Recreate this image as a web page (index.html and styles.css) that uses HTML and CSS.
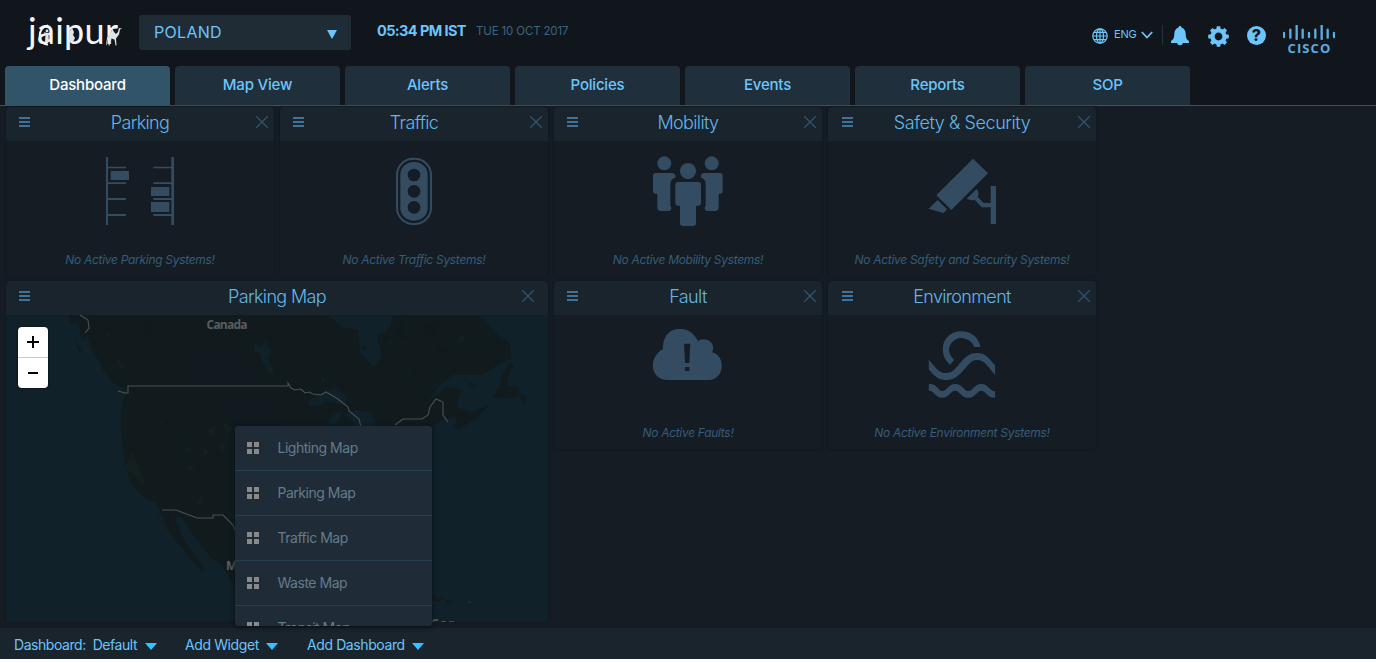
FILE: index.html
```html
<!DOCTYPE html>
<html lang="en">
<head>
<meta charset="utf-8">
<title>Dashboard</title>
<link rel="stylesheet" href="styles.css">
</head>
<body>
<svg class="defs" width="0" height="0">
  <symbol id="menu" viewBox="0 0 11 10"><path d="M0 0h11v2H0zM0 4h11v2H0zM0 8h11v2H0z" fill="currentColor"/></symbol>
  <symbol id="close" viewBox="0 0 12 12"><path d="M.3.3l11.400 11.400M11.700.3L.3 11.700" stroke="currentColor" stroke-width="1.300"/></symbol>
  <symbol id="tiles" viewBox="0 0 12 12"><path d="M0 0h5v5H0zM7 0h5v5H7zM0 7h5v5H0zM7 7h5v5H7z" fill="currentColor"/></symbol>
</svg>
<div class="app">
  <header class="header">
    <div class="brand">
      <span class="brand-name">jaipur</span>
      <svg class="brand-art" width="96" height="36" viewBox="0 0 96 36">
        <path d="M21 7.500C10 9 10 26 21 26.500" fill="none" stroke="#f4f6f7" stroke-width="2"/>
        <g fill="#dfe3e5"><circle cx="20" cy="13" r="1.400"/><path d="M17 14l2.500 1h1.500l2.500-1-2 3 .5 7h-4l.5-7zM45 10l2 4-1 3 2 3-2 4h-3l-2-4 2-3-1-3z"/>
        <path d="M79 27l1-7 2-3 2-3 1.500-3 1.500 3 2 2 2-2 1-4 3 .5-2 1-1 5-3 4 .5 7h-1l-1-6-3-1-2 7h-1l1-7-2 1-1 6z"/></g>
      </svg>
    </div>
    <div class="city"><span>POLAND</span><svg width="10" height="9" viewBox="0 0 10 9"><path d="M0 0h10L5 9z" fill="#6cc5fb"/></svg></div>
    <div class="time">05:34 PM IST</div>
    <div class="date">TUE 10 OCT 2017</div>
    <div class="tools">
      <svg class="globe" width="16" height="16" viewBox="0 0 16 16" fill="none" stroke="#6cc5fb" stroke-width="1.200"><circle cx="8" cy="8" r="7.200"/><ellipse cx="8" cy="8" rx="3.500" ry="7.200"/><path d="M8 .8v14.400M.8 8h14.400M2 4.400h12M2 11.600h12"/></svg>
      <span class="lang">ENG</span>
      <svg class="chev" width="12" height="8" viewBox="0 0 12 8"><path d="M.8 1l5.200 5.500L11.200 1" fill="none" stroke="#6cc5fb" stroke-width="1.800"/></svg>
      <span class="divider"></span>
      <svg class="bell" width="18" height="20" viewBox="0 0 18 20"><path d="M9 0c1 0 1.500.6 1.500 1.600C13.500 2.500 14.500 5 14.700 8c.2 4 .8 5.500 3.300 7v2h-6.300a2.700 2.200 0 0 1-5.400 0H0v-2c2.500-1.500 3.100-3 3.300-7 .2-3 1.200-5.500 4.200-6.400C7.500.6 8 0 9 0z" fill="#6cc5fb"/></svg>
      <svg class="gear" width="21" height="21" viewBox="-10.500 -10.500 21 21"><g fill="#6cc5fb"><path id="tooth" d="M-2.400-6L-1.700-10.300H1.700L2.400-6z"/><use href="#tooth" transform="rotate(45)"/><use href="#tooth" transform="rotate(90)"/><use href="#tooth" transform="rotate(135)"/><use href="#tooth" transform="rotate(180)"/><use href="#tooth" transform="rotate(225)"/><use href="#tooth" transform="rotate(270)"/><use href="#tooth" transform="rotate(315)"/></g><circle r="6" fill="none" stroke="#6cc5fb" stroke-width="4.200"/></svg>
      <span class="help">?</span>
      <div class="cisco"><svg width="52" height="15" viewBox="699 74 156 45"><path d="M702 98v12M721 88v24M740 76v40M758 88v24M777 98v12M796 88v24M815 76v40M833 88v24M852 98v12" stroke="#5eaddf" stroke-width="7" stroke-linecap="round"/></svg><span>CISCO</span></div>
    </div>
  </header>
  <nav class="tabs">
    <a class="tab active">Dashboard</a><a class="tab">Map View</a><a class="tab">Alerts</a><a class="tab">Policies</a><a class="tab">Events</a><a class="tab">Reports</a><a class="tab">SOP</a>
  </nav>
  <main class="grid">
    <section class="card">
      <div class="card-head"><svg class="ham"><use href="#menu"/></svg><h2>Parking</h2><svg class="x"><use href="#close"/></svg></div>
      <svg class="pic" viewBox="312 165 216 216"><path d="M318 171h6v204h-6zM514 171h8v204h-8zM324 200h54v5h-54zM324 247h54v5h-54zM324 294h54v6h-54zM324 342h54v6h-54zM460 200h54v5h-54zM460 247h54v5h-54zM460 294h54v6h-54zM460 342h54v6h-54zM332 213h55v27h-55zM453 261h55v27h-55zM453 306h55v30h-55z"/></svg>
      <p>No Active Parking Systems!</p>
    </section>
    <section class="card">
      <div class="card-head"><svg class="ham"><use href="#menu"/></svg><h2>Traffic</h2><svg class="x"><use href="#close"/></svg></div>
      <svg class="pic" viewBox="309 165 216 216"><rect x="366" y="176" width="102" height="196" rx="49" fill="none" stroke="#344c62" stroke-width="6"/><rect x="376" y="186" width="82" height="176" rx="39"/><g fill="#151c23"><circle cx="417" cy="225" r="19"/><circle cx="417" cy="274" r="19"/><circle cx="417" cy="322" r="19"/></g></svg>
      <p>No Active Traffic Systems!</p>
    </section>
    <section class="card">
      <div class="card-head"><svg class="ham"><use href="#menu"/></svg><h2>Mobility</h2><svg class="x"><use href="#close"/></svg></div>
      <svg class="pic" viewBox="306 165 216 216"><circle cx="343" cy="190" r="21"/><circle cx="485" cy="190" r="21"/><circle cx="414" cy="213" r="24"/><path d="M318 219h50q9 2 9 13-16 6-16 20v64l3 8q0 8-8 9h-27q-7-1-7-8v-43q-13 0-13-8v-47q0-8 9-8zM510 219h-49q-9 2-9 13 15 6 15 20v64l-3 8q0 8 8 9h26q8-1 8-8v-43q12 0 12-8v-47q0-8-8-8zM384 246h61q8 0 8 8v55q0 9-15 9v51q0 9-9 9h-30q-9 0-9-9v-51q-14 0-14-9v-55q0-8 8-8z"/></svg>
      <p>No Active Mobility Systems!</p>
    </section>
    <section class="card">
      <div class="card-head"><svg class="ham last"><use href="#menu"/></svg><h2 class="wide">Safety &amp; Security</h2><svg class="x"><use href="#close"/></svg></div>
      <svg class="pic" viewBox="303 165 216 216"><path d="M444 176l45 44-110 110-45-44zM338 300l28 28-10 11-45-13zM455 267q9 12 3 24l18 18h21v-51h16v114h-16v-50h-27l-21-23q-12 4-24-3z"/></svg>
      <p>No Active Safety and Security Systems!</p>
    </section>
    <section class="card map-card">
      <div class="card-head"><svg class="ham"><use href="#menu"/></svg><h2>Parking Map</h2><svg class="x"><use href="#close"/></svg></div>
      <div class="map">
        <svg width="542" height="307" viewBox="0 0 542 307">
          <rect width="542" height="307" fill="#10212a"/>
          <path fill="#111b1e" d="M62 0L66 9 72 7 74 15 82 23 86 37 94 47 97 55 105 59 115 71 122 75 116 88 115 105 116 125 119 152 125 168 137 182 150 188 158 203 160 213 167 223 176 233 186 246 196 257 199 254 190 242 178 225 169 202 177 203 181 212 191 225 204 242 216 250 226 268 229 282 260 300 380 300 400 285 420 272 424 240 415 200 424 160 426 112 436 105 448 103 442 96 451 104 470 98 481 93 484 90 466 98 453 93 451 85 456 75 440 72 430 80 421 87 432 72 446 60 476 60 486 53 505 43 504 28 493 20 486 13 472 0 387 0 384 12 371 22 376 42 367 52 354 37 352 15 336 12 322 0z"/>
          <path fill="#111b1e" d="M504 48l4 2-7 15 2 6 10 2 0 7 8 0-2 10-5-8-12 1-16-1 7-9 3-14zM447 110l7-8 27-11-10 12-19 12zM458 65l12 5-2 3zM74 15l7 2-2 9-5-6zM94 49l10 4 16 22-14-8zM68 25l5 12 3-2zM425 280l12 4-4 3-10-2zM440 285l8 2-8 1z"/>
          <path fill="#111b1e" d="M356 31l4 1-1 4-4-2z"/>
          <g fill="#10212a"><path d="M301 90l8-10 20-7 12 9-2 8-18-4-8 5zM322 108l6-9 8-2-7 14zM338 100l11-5 16 3 5 10-8 7-12-1-4-9zM248 28l8 4 3-6 6 9-3 8 6 15-4 1-8-13-2-8-6-1zM316 60l4 8-4-1zM450 26l6-6 4 6zM480 30l8-5-5 5zM402 56l4-4-3 6zM382 28l6-3-3 4zM398 3l4 3-2 1zM178 128l6 8-3 1z"/></g>
          <path fill="#101a1f" d="M174 22l25 8 25-6 18 18 22 25 14 20-4 35h-40l-8-20-42-22-13-25z"/>
          <g fill="#10191b"><path d="M138 5l9 5-6 10-5-7zM388 12l10-6-3 10 10 10-12-3zM418 12l14-7-2 15-8 5zM430 30l12 5-12 3z"/></g>
          <g fill="#151f1f"><path d="M119 152l8-16 4 12 10 25-7-7zM153 108l4-5-2 7zM200 115l10-4-4 10zM196 132l8 5-5 5zM216 106l12 8-8 4zM212 125l7 6-2 7zM180 152l12-2-8 5zM100 14l7 10-5-2zM110 44l10 6-4 6zM190 190l5-12 2 12zM150 195l6 12-4-3z"/></g>
          <g fill="none" stroke="#4a5154" stroke-width="1.100"><path d="M74 0l8 5 1 8-4 5M112 76l7 2h3v-7h160v-3l3 5 4 2 6-1 4 4 4-1 4 2 8 1 5-3 12 7 10 8 1 4 10 8 2 8M389 110l8-6h19l6-4 2-8 6-8 7 3v13l5 7M156 195h14l21 8h16v-3h10l10 10 2 5"/></g>
          <g class="map-text"><text x="200.500" y="14" textLength="41">Canada</text><text x="220" y="255">Mexico</text><text x="425" y="313" textLength="23">Car</text></g>
          <path d="M462 287h3" stroke="#30393c"/>
        </svg>
        <div class="zoom"><span><svg width="12" height="12" viewBox="0 0 12 12"><path d="M6 0v12M0 6h12" stroke="#000" stroke-width="2"/></svg></span><span><svg width="12" height="12" viewBox="0 0 12 12"><path d="M1 6h10" stroke="#000" stroke-width="2"/></svg></span></div>
      </div>
    </section>
    <section class="card">
      <div class="card-head"><svg class="ham"><use href="#menu"/></svg><h2>Fault</h2><svg class="x"><use href="#close"/></svg></div>
      <svg class="pic" viewBox="290.800 147 205.300 216" preserveAspectRatio="none"><path d="M338 300C282 300 281 231 322 207 320 130 402 131 421 183 447 167 475 190 462 217 503 227 498 300 452 300z"/><path d="M382 191h18l-3 58h-12zM385 261h12v12h-12z" fill="#151c23"/></svg>
      <p>No Active Faults!</p>
    </section>
    <section class="card">
      <div class="card-head"><svg class="ham last"><use href="#menu"/></svg><h2>Environment</h2><svg class="x"><use href="#close"/></svg></div>
      <svg class="pic" viewBox="1072 147 205.300 216" preserveAspectRatio="none"><path d="M1227 201C1217 135 1120 140 1120 207 1120 228 1128 244 1141 254L1152 240C1117 205 1154 164 1184 176 1199 181 1205 189 1210 201zM1080 239C1103 266 1108 279 1130 279 1165 279 1171 219 1218 219 1246 219 1254 241 1269 256V285C1246 258 1240 240 1216 240 1188 240 1176 300 1130 300 1102 300 1094 282 1080 269zM1080 312C1104 310 1106 333 1118 333 1132 333 1135 312 1155 312 1176 312 1180 333 1192 333 1206 333 1210 312 1230 312 1250 312 1252 333 1269 334V353C1246 354 1242 332 1230 332 1218 332 1212 353 1192 353 1172 353 1168 332 1155 332 1142 332 1138 353 1118 353 1098 353 1096 332 1080 332z"/></svg>
      <p>No Active Environment Systems!</p>
    </section>
  </main>
  <footer class="footer">
    <div class="item dash"><span>Dashboard:&nbsp; Default</span><i class="caret"></i></div>
    <div class="item widget"><span>Add Widget</span><i class="caret"></i>
      <div class="menu">
        <div class="row"><svg><use href="#tiles"/></svg>Lighting Map</div>
        <div class="row"><svg><use href="#tiles"/></svg>Parking Map</div>
        <div class="row"><svg><use href="#tiles"/></svg>Traffic Map</div>
        <div class="row"><svg><use href="#tiles"/></svg>Waste Map</div>
        <div class="row"><svg><use href="#tiles"/></svg>Transit Map</div>
      </div>
    </div>
    <div class="item add"><span>Add Dashboard</span><i class="caret"></i></div>
  </footer>
</div>
</body>
</html>
```
FILE: styles.css
```css
* { box-sizing: border-box; }
body { margin: 0; background: #fff; font-family: Inter, "Liberation Sans", sans-serif; color: #6cc5fb; overflow: hidden; }
.defs { position: absolute; }
.app { height: 659px; display: flex; flex-direction: column; background: #151c23; }
.header { height: 66px; flex: none; background: #10161b; display: flex; align-items: flex-start; }
.brand { position: relative; width: 112px; margin-left: 27px; height: 60px; padding-top: 8px; }
.brand-name { display: block; margin-left: 1px; font: 400 36px/44px Lato, sans-serif; letter-spacing: 0.3px; color: #f4f6f7; }
.brand-art { position: absolute; left: 0; top: 18px; }
.city { width: 212px; height: 35px; margin-top: 15px; padding: 0 14px 0 15px; background: #1f2c36; border-radius: 3px; display: flex; align-items: center; justify-content: space-between; font-size: 16px; letter-spacing: 0.3px; }
.city span { padding-bottom: 2px; }
.city svg { margin-top: 3px; }
.time { margin: 21px 0 0 26px; width: 99px; font-size: 14.500px; line-height: 20px; font-weight: 700; white-space: nowrap; letter-spacing: -0.6px; }
.date { margin-top: 21px; font-size: 11.500px; line-height: 20px; color: #3c6580; white-space: nowrap; letter-spacing: -0.15px; }
.tools { margin-left: auto; width: 284px; height: 66px; display: flex; align-items: flex-start; }
.globe { margin-top: 28px; }
.lang { margin: 27px 0 0 6px; width: 23px; font-size: 11px; line-height: 15px; letter-spacing: -0.2px; }
.chev { margin: 31px 0 0 4px; }
.divider { width: 1px; height: 20px; margin: 25px 8px 0 9px; background: #22333f; }
.bell { margin-top: 26px; }
.gear { margin: 26px 0 0 19px; }
.help { width: 19px; height: 19px; margin: 26px 0 0 18px; border-radius: 50%; background: #6cc5fb; color: #10161b; font-size: 16px; font-weight: 800; line-height: 19px; text-align: center; }
.cisco { margin: 25px 0 0 17px; width: 52px; display: flex; flex-direction: column; align-items: center; }
.cisco span { font: 700 13px/14px "Open Sans", sans-serif; letter-spacing: 1.100px; margin: 1px 0 0 1px; color: #5eaddf; }
.tabs { height: 40px; flex: none; padding-left: 5px; display: flex; gap: 5px; background: #10161b; border-bottom: 1px solid #315468; }
.tab { width: 165px; height: 39px; background: #1f303c; border-radius: 4px 4px 0 0; text-align: center; font-size: 15px; line-height: 37px; font-weight: 500; letter-spacing: -0.2px; }
.tab.active { background: #315468; color: #fff; }
.grid { flex: 1; padding: 1px 6px 0; display: grid; grid-template-columns: repeat(4, 268px); grid-template-rows: 169px 168px 168px; column-gap: 6px; row-gap: 5px; }
.card { border-radius: 4px; display: flex; flex-direction: column; align-items: center; box-shadow: 0 0 2px #0e1319; }
.card-head { width: 100%; height: 34px; background: #1a242c; border-radius: 4px 4px 0 0; display: flex; align-items: center; padding: 0 6px 4px 13px; }
.card-head h2 { flex: 1; margin: 2px 0 0 -6px; font-size: 18px; line-height: 26px; font-weight: 300; text-align: center; color: #65b6e8; letter-spacing: -0.65px; }
.card-head h2.wide { letter-spacing: -0.42px; }
.ham { width: 11px; height: 10px; color: #417397; }
.ham.last { margin: 0 -1px 0 1px; }
.x { width: 12px; height: 12px; color: #33536b; }
.pic { width: 72px; height: 72px; margin-top: 14px; fill: #344c62; }
.card p { margin: 23px 0 0; font-size: 12px; line-height: 18px; font-style: italic; color: #365d79; font-weight: 400; letter-spacing: -0.3px; white-space: nowrap; }
.card:nth-child(-n+4) p { margin-top: 24px; }
.map-card { grid-column: span 2; grid-row: span 2; }
.map-card .card-head { padding-right: 14px; }
.map-card .card-head h2 { margin-left: 2px; }
.map { position: relative; width: 542px; height: 307px; overflow: hidden; border-radius: 0 0 4px 4px; }
.map svg { display: block; }
.map-text { font: 700 12px "Open Sans", sans-serif; fill: #5a5d5f; }
.zoom { position: absolute; left: 12px; top: 12px; width: 30px; height: 61px; background: #fff; border-radius: 4px; box-shadow: 0 0 3px #0008; }
.zoom span { height: 30px; display: flex; align-items: center; justify-content: center; }
.zoom span + span { height: 31px; border-top: 1px solid #ccc; }
.footer { height: 31px; flex: none; background: #1a242c; display: flex; padding-left: 14px; font-size: 14px; line-height: 34px; white-space: nowrap; letter-spacing: -0.4px; }
.item { position: relative; display: flex; height: 31px; }
.dash { width: 171px; letter-spacing: -0.45px; }
.widget { width: 122px; }
.caret { width: 0; height: 0; margin: 15px 0 0 7.500px; border: 6.500px solid transparent; border-top: 7px solid #35c3ff; border-bottom: 0; }
.menu { position: absolute; left: 50px; bottom: 33px; width: 197px; height: 200px; overflow: hidden; background: #1f2b36; border-radius: 3px; box-shadow: 0 1px 5px #0a0f13; }
.row { height: 45px; display: flex; align-items: center; padding-left: 12px; border-bottom: 1px solid #263e4e; color: #637b8c; font-weight: 400; line-height: 20px; letter-spacing: -0.48px; }
.row svg { width: 12px; height: 12px; margin-right: 18.500px; color: #898989; }
```
